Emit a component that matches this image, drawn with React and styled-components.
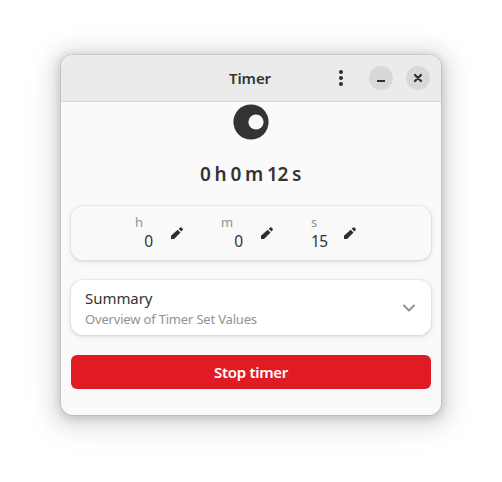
import React from "react";
import styled, { createGlobalStyle } from "styled-components";

const GlobalStyle = createGlobalStyle`
  * { box-sizing: border-box; }
  body {
    margin: 0;
    background: #fff;
    overflow: hidden;
    font-family: "Noto Sans", "Open Sans", sans-serif;
    color: #333;
  }
`;

const Desktop = styled.div`
  width: 502px;
  height: 482px;
  padding: 55px 61px;
`;

const Window = styled.main`
  width: 380px;
  height: 360px;
  display: flex;
  flex-direction: column;
  border-radius: 12px;
  overflow: hidden;
  background: #fafafa;
  box-shadow:
    0 0 0 1px rgba(0, 0, 0, 0.07),
    0 2px 8px 2px rgba(0, 0, 0, 0.14),
    0 3px 20px 9px rgba(0, 0, 0, 0.09),
    0 5px 32px 14px rgba(0, 0, 0, 0.04);
`;

const HeaderBar = styled.header`
  height: 47px;
  flex: none;
  display: grid;
  grid-template-columns: 1fr auto 1fr;
  align-items: center;
  background: #ebebeb;
  border-bottom: 1px solid #d8d8d8;
`;

const Title = styled.h1`
  grid-column: 2;
  margin: 0 2px 1px 0;
  font-size: 15px;
  line-height: 20px;
  font-weight: 650;
  letter-spacing: -0.1px;
`;

const Controls = styled.div`
  display: flex;
  align-items: center;
  justify-content: flex-end;
  gap: 13px;
  padding-right: 11px;
`;

const IconButton = styled.button`
  width: 24px;
  height: 24px;
  padding: 0;
  border: 0;
  display: grid;
  place-items: center;
  border-radius: 50%;
  color: #2e2e2e;
  background: ${(p) => (p.$flat ? "transparent" : "#d8d8d8")};
  margin-right: ${(p) => (p.$flat ? 3 : 0)}px;
`;

const Icon = styled.svg`
  display: block;
  flex: none;
`;

const Content = styled.section`
  padding: 2px 10px 0;
  display: flex;
  flex-direction: column;
`;

const Dial = styled(Icon)`
  align-self: center;
`;

const Remaining = styled.div`
  margin-top: 20px;
  height: 28px;
  padding-right: 1px;
  text-align: center;
  font-size: 19px;
  line-height: 28px;
  font-weight: 650;
  letter-spacing: -0.4px;
  word-spacing: -0.4px;
`;

const Card = styled.div`
  display: flex;
  align-items: center;
  border-radius: 12px;
  background: ${(p) => (p.$plain ? "#f9f9f9" : "#fff")};
  box-shadow:
    0 0 0 1px rgba(0, 0, 0, 0.03),
    0 1px 3px 1px rgba(0, 0, 0, 0.07),
    0 2px 6px 2px rgba(0, 0, 0, 0.03);
`;

const FieldsCard = styled(Card)`
  height: 54px;
  margin-top: 18px;
  padding-left: 64px;
`;

const Field = styled.div`
  width: ${(p) => p.$width}px;
  height: 54px;
  display: flex;
  gap: ${(p) => p.$gap}px;
`;

const FieldText = styled.div`
  width: ${(p) => p.$width}px;
  padding-top: 7px;
`;

const Label = styled.div`
  font-size: 13px;
  line-height: 18px;
  color: #929292;
`;

const Value = styled.div`
  font-size: 15.5px;
  line-height: 20px;
  text-align: right;
  letter-spacing: -0.5px;
`;

const EditIcon = styled(Icon)`
  margin-top: 19px;
`;

const SummaryCard = styled(Card)`
  height: 55px;
  margin-top: 20px;
  padding: 1px 15px 0 14px;
  justify-content: space-between;
`;

const SummaryTitle = styled.div`
  font-size: 15px;
  line-height: 21px;
  letter-spacing: -0.05px;
`;

const Subtitle = styled.div`
  font-size: 13px;
  line-height: 20px;
  color: #929292;
  letter-spacing: -0.18px;
`;

const StopButton = styled.button`
  height: 34px;
  margin-top: 20px;
  padding: 0;
  border: 0;
  border-radius: 6px;
  background: #e01b24;
  color: #fff;
  font: 650 15px/34px "Noto Sans", sans-serif;
  letter-spacing: -0.3px;
`;

const fields = [
  { label: "h", value: "0", width: 86, textWidth: 17.5, gap: 16.5 },
  { label: "m", value: "0", width: 90, textWidth: 21.5, gap: 16.5 },
  { label: "s", value: "15", width: 60, textWidth: 15.5, gap: 15.5 },
];

function Pencil() {
  return (
    <EditIcon width="16" height="16" viewBox="0 0 16 16" fill="#2e2e2e">
      <path d="M2 14v-3.2l6.7-6.1 2.8 2.8L5 14zM9.7 3.8l1.5-1.4q.6-.5 1.2 0l1.3 1.3q.5.6 0 1.2l-1.3 1.6z" />
    </EditIcon>
  );
}

export default function App() {
  return (
    <>
      <GlobalStyle />
      <Desktop>
        <Window>
          <HeaderBar>
            <Title>Timer</Title>
            <Controls>
              <IconButton $flat aria-label="Menu">
                <Icon width="16" height="16" viewBox="0 0 16 16" fill="currentColor">
                  <circle cx="8" cy="2" r="2" />
                  <circle cx="8" cy="8" r="2" />
                  <circle cx="8" cy="14" r="2" />
                </Icon>
              </IconButton>
              <IconButton aria-label="Minimize">
                <Icon width="16" height="16" viewBox="0 0 16 16" fill="currentColor">
                  <path d="M4 10h8v2H4z" />
                </Icon>
              </IconButton>
              <IconButton aria-label="Close">
                <Icon width="16" height="16" viewBox="0 0 16 16" fill="none" stroke="currentColor" strokeWidth="2.2" strokeLinecap="round">
                  <path d="M5 5l6 6M11 5l-6 6" />
                </Icon>
              </IconButton>
            </Controls>
          </HeaderBar>
          <Content>
            <Dial width="36" height="36" viewBox="0 0 36 36">
              <circle cx="18" cy="18" r="17.6" fill="#333" />
              <circle cx="23" cy="18" r="7.6" fill="#fafafa" />
            </Dial>
            <Remaining>0 h 0 m 12 s</Remaining>
            <FieldsCard $plain>
              {fields.map((f) => (
                <Field key={f.label} $width={f.width} $gap={f.gap}>
                  <FieldText $width={f.textWidth}>
                    <Label>{f.label}</Label>
                    <Value>{f.value}</Value>
                  </FieldText>
                  <Pencil />
                </Field>
              ))}
            </FieldsCard>
            <SummaryCard>
              <div>
                <SummaryTitle>Summary</SummaryTitle>
                <Subtitle>Overview of Timer Set Values</Subtitle>
              </div>
              <Icon width="14" height="14" viewBox="0 0 14 14" fill="none" stroke="#929292" strokeWidth="2" strokeLinecap="round" strokeLinejoin="round">
                <path d="M2 4.5l5 5 5-5" />
              </Icon>
            </SummaryCard>
            <StopButton>Stop timer</StopButton>
          </Content>
        </Window>
      </Desktop>
    </>
  );
}
